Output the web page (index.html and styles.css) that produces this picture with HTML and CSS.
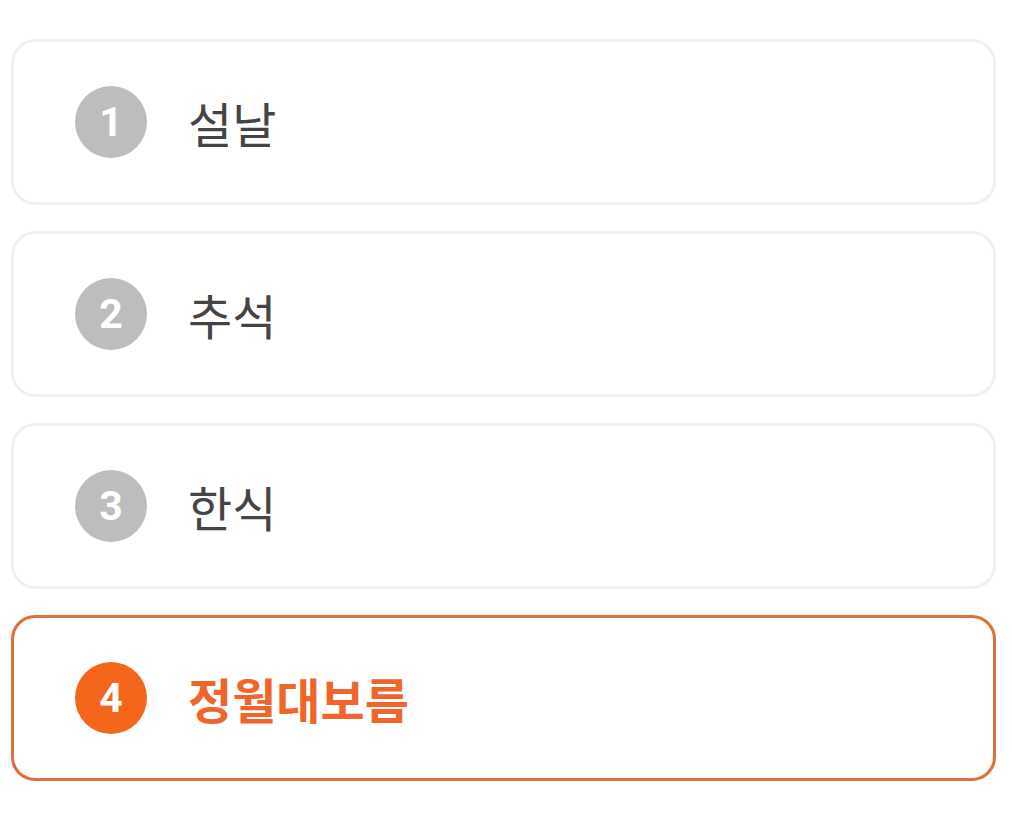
FILE: index.html
```html
<!DOCTYPE html>
<html lang="ko">
<head>
    <meta charset="UTF-8">
    <title>명절 선택</title>
    <link rel="stylesheet" href="styles.css">
</head>
<body>
    <div class="option-list">
        <div class="option">
            <span class="option-num">1</span>
            <span class="option-label">설날</span>
        </div>
        <div class="option">
            <span class="option-num">2</span>
            <span class="option-label">추석</span>
        </div>
        <div class="option">
            <span class="option-num">3</span>
            <span class="option-label">한식</span>
        </div>
        <div class="option selected">
            <span class="option-num">4</span>
            <span class="option-label">정월대보름</span>
        </div>
    </div>
</body>
</html>
```

FILE: styles.css
```css
body {
    font-family: "Noto Sans CJK KR", "Noto Sans", sans-serif;
    background-color: #ffffff;
    margin: 0;
    padding: 0;
}
.option-list {
    display: flex;
    flex-direction: column;
    gap: 26px;
    padding: 39px 16px 0 11px;
}
.option {
    display: flex;
    align-items: center;
    height: 166px;
    box-sizing: border-box;
    padding-left: 61px;
    border: 3px solid #f0f0f0;
    border-radius: 24px;
    background-color: #ffffff;
}
.option-num {
    display: flex;
    align-items: center;
    justify-content: center;
    width: 72px;
    height: 72px;
    border-radius: 50%;
    background-color: #bdbdbd;
    color: #ffffff;
    font-family: "Roboto", "Liberation Sans", sans-serif;
    font-weight: 700;
    font-size: 41px;
}
.option-label {
    margin-left: 41px;
    font-size: 48px;
    font-weight: 400;
    color: #444444;
    line-height: 1;
}
.option.selected {
    border-color: #e0703a;
}
.option.selected .option-num {
    background-color: #f4661c;
}
.option.selected .option-label {
    color: #f0662a;
    font-weight: 700;
}
```
